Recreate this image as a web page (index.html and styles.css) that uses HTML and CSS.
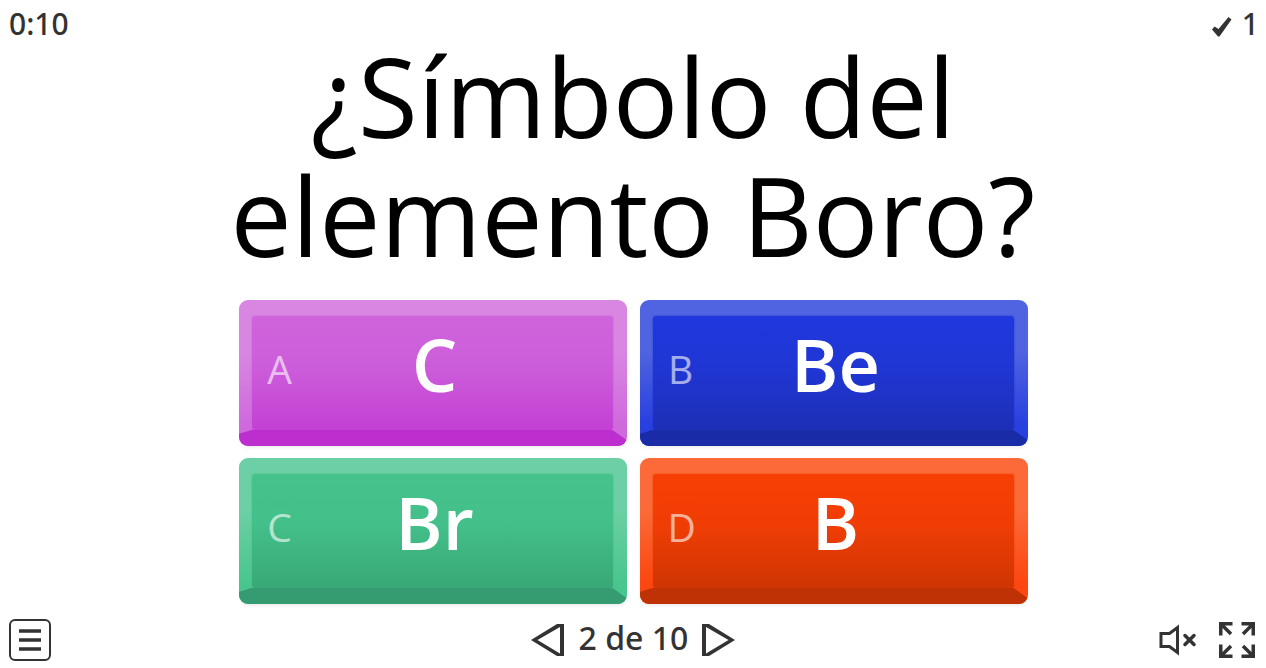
FILE: index.html
```html
<!DOCTYPE html>
<html lang="es">
<head>
<meta charset="utf-8">
<meta name="viewport" content="width=device-width, initial-scale=1">
<title>¿Símbolo del elemento Boro?</title>
<link rel="stylesheet" href="styles.css">
</head>
<body>
<header class="status">
  <span class="timer">0:10</span>
  <span class="score">
    <svg class="tick" width="20" height="20" viewBox="0 0 20 20" aria-hidden="true"><path d="M0 12.500L2.500 9.500L6.500 12L16.500 0L19.500 2.500L7.500 19.500H6Z" fill="#333"/></svg>
    <span>1</span>
  </span>
</header>
<main class="quiz">
  <h1 class="question">¿Símbolo del elemento Boro?</h1>
  <div class="answers">
    <button class="answer pink" type="button"><span class="face"><span class="letter">A</span><span class="text">C</span></span></button>
    <button class="answer blue" type="button"><span class="face"><span class="letter">B</span><span class="text">Be</span></span></button>
    <button class="answer green" type="button"><span class="face"><span class="letter">C</span><span class="text">Br</span></span></button>
    <button class="answer orange" type="button"><span class="face"><span class="letter">D</span><span class="text">B</span></span></button>
  </div>
</main>
<footer class="toolbar">
  <div class="side">
    <button class="icon" type="button" aria-label="Menú">
      <svg width="42" height="42" viewBox="0 0 42 42"><rect x="1" y="1" width="40" height="40" rx="5" fill="none" stroke="#333" stroke-width="2"/><path d="M10 12H32M10 21H32M10 30H32" stroke="#333" stroke-width="3.500"/></svg>
    </button>
  </div>
  <nav class="pager" aria-label="Preguntas">
    <button class="icon" type="button" aria-label="Anterior">
      <svg width="34" height="32" viewBox="0 0 34 32"><path fill="#333" fill-rule="evenodd" d="M0 16L26 0H33V32H26ZM6.500 16L29 29.500V3Z"/></svg>
    </button>
    <span class="page">2 de 10</span>
    <button class="icon" type="button" aria-label="Siguiente">
      <svg width="34" height="32" viewBox="0 0 34 32"><path fill="#333" fill-rule="evenodd" d="M33 16L7 0H0V32H7ZM26.500 16L4 29.500V3Z"/></svg>
    </button>
  </nav>
  <div class="side end">
    <button class="icon" type="button" aria-label="Activar sonido">
      <svg width="38" height="32" viewBox="0 0 38 32"><path d="M2 9.500H10.500L18.500 3.500V28.500L10.500 22.500H2Z" fill="none" stroke="#333" stroke-width="3"/><path d="M26 11.500L35 20.500M35 11.500L26 20.500" stroke="#333" stroke-width="3.500" stroke-linecap="round"/></svg>
    </button>
    <button class="icon" type="button" aria-label="Pantalla completa">
      <svg width="36" height="36" viewBox="0 0 36 36" fill="none" stroke="#333" stroke-width="3.500"><path d="M13.500 1.750H1.750V13.500M2 2L12 12M22.500 1.750H34.250V13.500M34 2L24 12M13.500 34.250H1.750V22.500M2 34L12 24M22.500 34.250H34.250V22.500M34 34L24 24"/></svg>
    </button>
  </div>
</footer>
</body>
</html>
```
FILE: styles.css
```css
* { box-sizing: border-box; }

body {
  margin: 0;
  min-height: 100vh;
  display: flex;
  flex-direction: column;
  background: #fff;
  color: #333;
  font-family: "Open Sans", "Noto Sans", sans-serif;
}

button {
  padding: 0;
  border: 0;
  background: none;
  font: inherit;
  color: inherit;
  cursor: pointer;
}

svg { display: block; }

.status, .page { font-family: "Noto Sans", "Open Sans", sans-serif; }

.status {
  display: flex;
  justify-content: space-between;
  align-items: flex-start;
  padding: 4px 7px 0 9px;
  height: 36px;
  font-size: 30px;
  line-height: 40px;
  font-weight: 500;
}

.score {
  display: flex;
  align-items: center;
  gap: 10px;
}

.tick { margin-top: 6px; }

.quiz {
  flex: 1;
  display: flex;
  flex-direction: column;
  align-items: center;
  gap: 26px;
}

.question {
  margin: 0;
  max-width: 840px;
  text-align: center;
  color: #000;
  font-size: 109px;
  line-height: 119px;
  font-weight: 400;
}

.answers {
  width: 100%;
  max-width: 789px;
  display: grid;
  grid-template-columns: 1fr 1fr;
  gap: 12px 13px;
}

.answer {
  position: relative;
  display: flex;
  padding: 16px 14px 16px 13px;
  border-radius: 9px;
  overflow: hidden;
  color: #fff;
  background: linear-gradient(var(--rim) 35%, var(--rim-low) 85%);
  box-shadow: 0 3px 4px -2px rgb(0 0 0 / 10%);
}

/* Lower bevel */
.answer::after {
  content: "";
  position: absolute;
  inset: auto 0 0;
  height: 20px;
  background: var(--base);
  clip-path: polygon(0 8px, 13px 4px, calc(100% - 14px) 4px, 100% 14px, 100% 100%, 0 100%);
}

.face {
  flex: 1;
  display: flex;
  align-items: center;
  height: 114px;
  padding: 0 16px 0 15px;
  border-radius: 3px;
  background: linear-gradient(var(--top), var(--mid) 45%, var(--low));
  box-shadow: 0 0 2px var(--mid);
}

.letter {
  width: 26px;
  margin-top: -9px;
  font-size: 39px;
  line-height: 48px;
  text-align: center;
  opacity: 0.6;
}

.text {
  flex: 1;
  margin-top: -19px;
  padding-left: 12px;
  padding-right: 32px;
  font-size: 72px;
  line-height: 96px;
  font-weight: 600;
  text-align: center;
}

.pink { --rim: #d886e2; --rim-low: #cf6add; --top: #cf64dc; --mid: #cc5dda; --low: #c340d4; --base: #bc2fce; }
.blue { --rim: #5063e0; --rim-low: #2840e0; --top: #1f37dd; --mid: #2036d4; --low: #1d2fb6; --base: #1a2ba8; }
.green { --rim: #6dcfa5; --rim-low: #49c68e; --top: #46c38c; --mid: #43bf89; --low: #38a876; --base: #349c70; }
.orange { --rim: #fb6a38; --rim-low: #fd4710; --top: #f73f04; --mid: #f03d05; --low: #ce3502; --base: #be3205; }

.toolbar {
  display: grid;
  grid-template-columns: 1fr auto 1fr;
  align-items: center;
  padding: 0 11px 7px 9px;
}

.side, .pager { display: flex; align-items: center; }
.pager { gap: 14px; padding-left: 3px; }
.end { justify-content: flex-end; gap: 22px; }

.page {
  font-size: 32px;
  line-height: 36px;
  font-weight: 500;
  padding-bottom: 5px;
}
```
